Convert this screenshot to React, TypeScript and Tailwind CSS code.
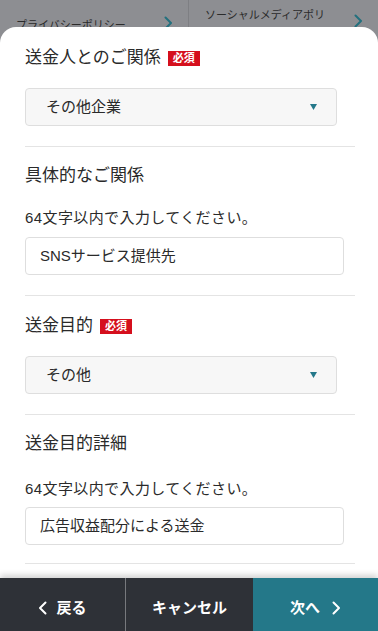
import React from "react";

const font = { fontFamily: '"Liberation Sans", "Noto Sans CJK JP", sans-serif' };

function Chevron({ dir = "right", className = "" }: { dir?: "left" | "right"; className?: string }) {
  return (
    <svg width="9" height="14" viewBox="0 0 9 14" className={className} fill="none">
      <polyline
        points={dir === "right" ? "1.5,1.5 7,7 1.5,12.5" : "7.5,1.5 2,7 7.5,12.5"}
        stroke="currentColor"
        strokeWidth="2"
        strokeLinecap="round"
        strokeLinejoin="round"
      />
    </svg>
  );
}

function Badge() {
  return (
    <span className="ml-[7px] inline-flex h-[15px] w-[32px] items-center justify-center bg-[#d50f1d] text-[11px] font-bold leading-none text-white">
      必須
    </span>
  );
}

function SelectBox({ value }: { value: string }) {
  return (
    <div className="flex h-[38px] w-[312px] items-center justify-between rounded-[4px] border border-[#dedede] bg-[#f7f7f7] pl-[20px] pr-[19px]">
      <span className="text-[15px] text-[#2a2a2a]">{value}</span>
      <svg width="7" height="6" viewBox="0 0 7 6">
        <polygon points="0,0 7,0 3.5,6" fill="#24788a" />
      </svg>
    </div>
  );
}

function TextBox({ value }: { value: string }) {
  return (
    <div className="flex h-[38px] w-[319px] items-center rounded-[4px] border border-[#dedede] bg-white pl-[14px]">
      <span className="text-[15px] text-[#2a2a2a]">{value}</span>
    </div>
  );
}

const Divider = ({ className = "" }: { className?: string }) => (
  <div className={`h-px w-[330px] bg-[#e4e4e4] ${className}`} />
);

export default function App() {
  return (
    <div style={font} className="flex h-[631px] w-[378px] flex-col overflow-hidden bg-[#8d8e92]">
      {/* links peeking out behind the sheet */}
      <div className="flex h-[27px] shrink-0 overflow-hidden">
        <div className="flex w-[189px] items-start justify-between border-r border-[#7e7f83] pl-4 pr-[15px]">
          <span className="mt-[17px] text-[11px] leading-[16px] text-[#2b2b2b]">プライバシーポリシー</span>
          <Chevron className="mt-[16px] text-[#23707e]" />
        </div>
        <div className="flex flex-1 items-start justify-between pl-4 pr-[15px]">
          <span className="mt-[7px] text-[11px] leading-[16px] text-[#2b2b2b]">ソーシャルメディアポリ</span>
          <Chevron className="mt-[14px] text-[#23707e]" />
        </div>
      </div>

      <div className="flex flex-1 flex-col overflow-hidden rounded-t-[16px] bg-white px-[25px] pt-[19px] text-[#2a2a2a]">
        <div className="flex h-[24px] items-center">
          <span className="text-[17px] leading-[24px]">送金人とのご関係</span>
          <Badge />
        </div>
        <div className="mt-[18px]">
          <SelectBox value="その他企業" />
        </div>
        <Divider className="mt-[20px]" />

        <div className="mt-[17px] text-[17px] leading-[24px]">具体的なご関係</div>
        <div className="mt-[19px] text-[15px] leading-[22px] tracking-[0.4px]">64文字以内で入力してください。</div>
        <div className="mt-[8px]">
          <TextBox value="SNSサービス提供先" />
        </div>
        <Divider className="mt-[20px]" />

        <div className="mt-[18px] flex h-[24px] items-center">
          <span className="text-[17px] leading-[24px]">送金目的</span>
          <Badge />
        </div>
        <div className="mt-[18px]">
          <SelectBox value="その他" />
        </div>
        <Divider className="mt-[20px]" />

        <div className="mt-[17px] text-[17px] leading-[24px]">送金目的詳細</div>
        <div className="mt-[22px] text-[15px] leading-[22px] tracking-[0.4px]">64文字以内で入力してください。</div>
        <div className="mt-[7px]">
          <TextBox value="広告収益配分による送金" />
        </div>
        <Divider className="mt-[18px]" />
      </div>

      <div className="relative flex h-[53px] shrink-0 bg-[#2e3137] text-[15px] font-bold text-white shadow-[0_-3px_6px_rgba(0,0,0,0.18)]">
        <button className="flex w-[126px] items-center justify-center gap-[9px] border-r border-[#77797d] pt-[7px]">
          <Chevron dir="left" />
          <span>戻る</span>
        </button>
        <button className="flex w-[127px] items-center justify-center pt-[7px]">キャンセル</button>
        <button className="flex flex-1 items-center justify-center gap-[12px] bg-[#247889] pt-[7px]">
          <span>次へ</span>
          <Chevron dir="right" />
        </button>
      </div>
    </div>
  );
}
